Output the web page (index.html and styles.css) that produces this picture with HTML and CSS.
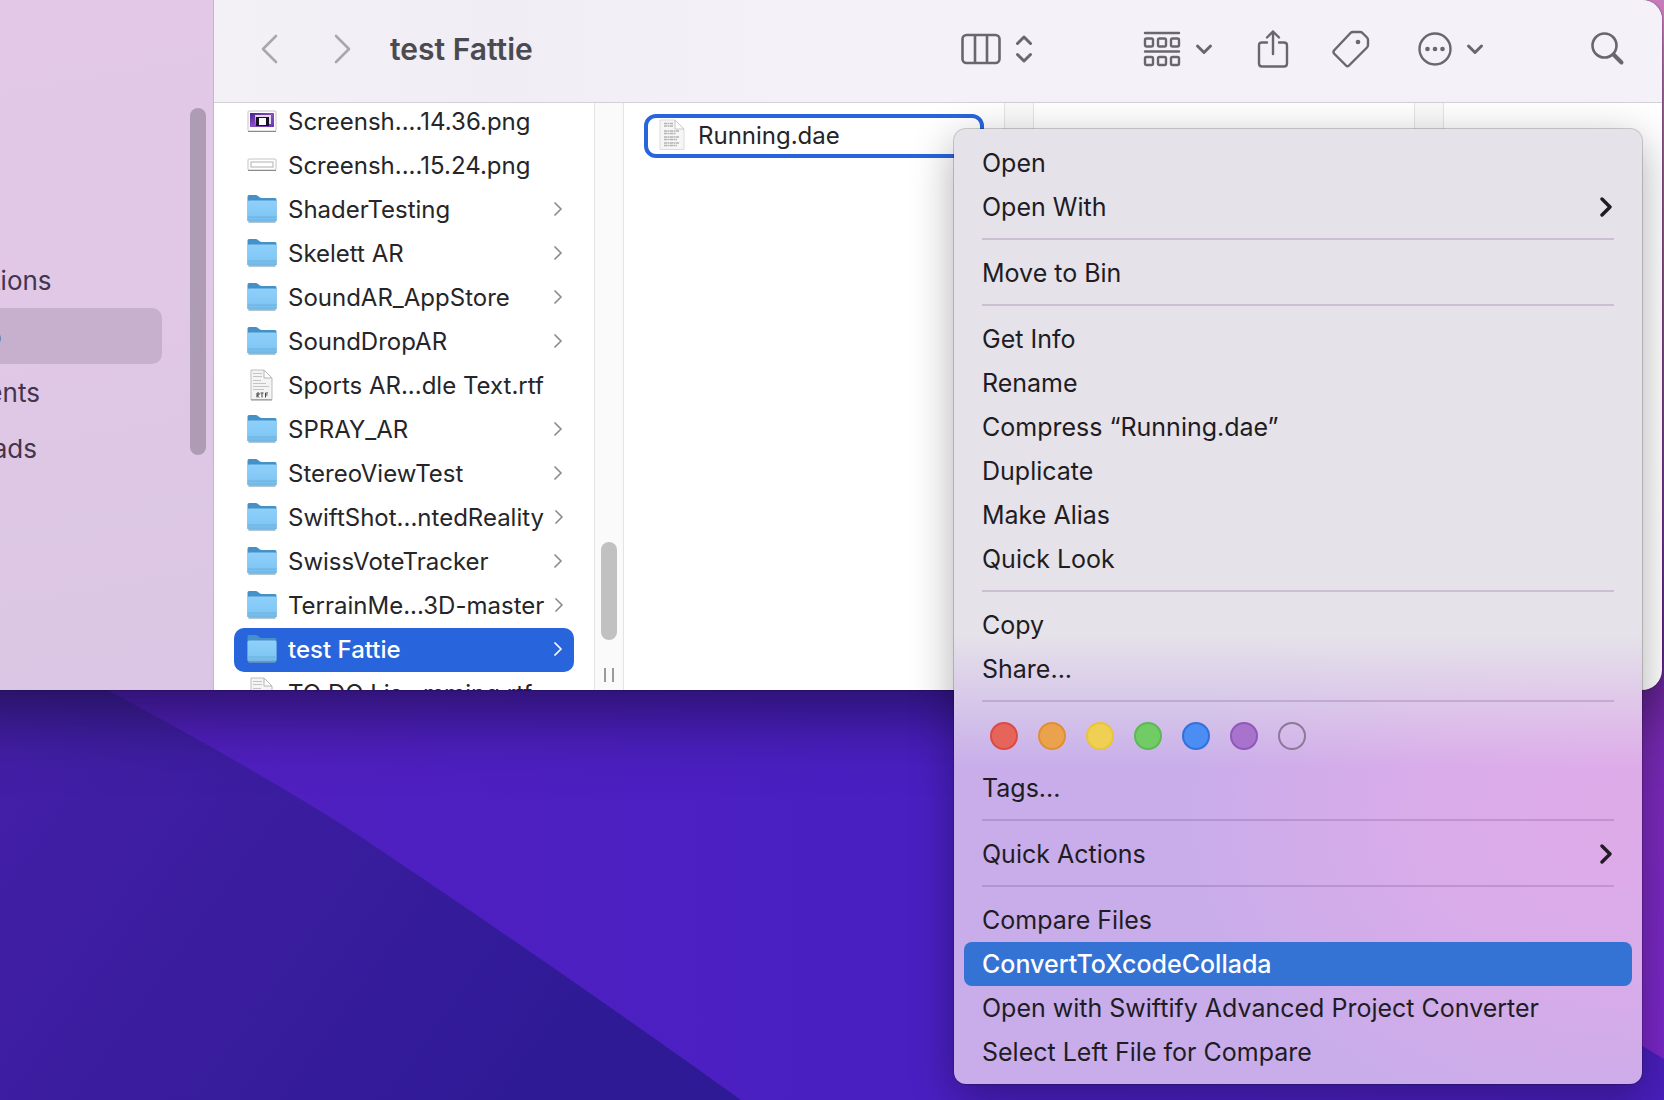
FILE: index.html
```html
<!DOCTYPE html>
<html lang="en">
<head>
<meta charset="utf-8">
<title>test Fattie</title>
<link rel="stylesheet" href="styles.css">
</head>
<body>
<svg class="symbols" aria-hidden="true">
  <defs>
    <linearGradient id="folder-front" x1="0" y1="0" x2="0" y2="1">
      <stop offset="0" stop-color="#8fd0fa"/><stop offset="0.7" stop-color="#82c8f6"/><stop offset="1" stop-color="#6fb5e4"/>
    </linearGradient>
    <linearGradient id="shot" x1="0" y1="0" x2="1" y2="1">
      <stop offset="0" stop-color="#43209a"/><stop offset="0.5" stop-color="#8a4fc0"/><stop offset="1" stop-color="#6a35b8"/>
    </linearGradient>
  </defs>
  <symbol id="folder" viewBox="0 0 30 32">
    <path d="M.5 28V3.500Q.5 2 2 2H8.500q1.500 0 2.500 1l1.500 1.200q1 .8 2.500 .8H28q1.500 0 1.500 1.500V28z" fill="#4690c8"/>
    <path d="M.5 9Q.5 7.500 2 7.500h26q1.500 0 1.500 1.500v18q0 1.500-1.500 1.500H2Q.5 28.500 .5 27z" fill="url(#folder-front)"/>
    <path d="M.5 24h29" stroke="#6fb0dc" stroke-width="1"/>
    <path d="M1.500 29h27" stroke="#7f9fb4" stroke-width="1.200"/>
  </symbol>
  <symbol id="rtf" viewBox="0 0 30 32">
    <path d="M4 1h13l8 8v21.500H4z" fill="#f4f4f4" stroke="#bdbdbd" stroke-width="1"/>
    <path d="M4 31h21" stroke="#8e8e8e" stroke-width="1"/>
    <path d="M17 1v8h8z" fill="#fff" stroke="#b5b5b5" stroke-width="1"/>
    <path d="M6 4.500h9M6 7.500h9M6 11.500h8M6 14.500h13M6 17.500h16M6 20.500h11" stroke="#c4c4c4" stroke-width="1"/>
    <path d="M10 28.500v-4.500h2v2h-2l2 2.500M13.500 24h3M15 24v4.500M18.500 28.500v-4.500h2.500M18.500 26h2" fill="none" stroke="#444" stroke-width="1"/>
  </symbol>
  <symbol id="dae" viewBox="0 0 30 32">
    <path d="M3 1h15l9 9v20.500H3z" fill="#f6f6f6" stroke="#dcdcdc" stroke-width="1"/>
    <path d="M18 1v9h9z" fill="#fff" stroke="#c8c8c8" stroke-width="1"/>
    <path d="M7 4.500h9M7 7h9M7 12h15M7 14.500h12M7 18h15M7 20.500h13M7 24h15M7 26.500h13" stroke="#b3b3b3" stroke-width="1.400" stroke-dasharray="3 .5 2 .5"/>
  </symbol>
  <symbol id="png-a" viewBox="0 0 30 32">
    <rect x="1" y="6" width="28" height="20" rx="1" fill="#fff" stroke="#c4c4c4"/>
    <path d="M1 26.500h28" stroke="#8a8a8a"/>
    <rect x="3" y="8" width="24" height="14" fill="url(#shot)"/>
    <path d="M8 10h16v9h-2l-1 2H9z" fill="#e5d9f0"/>
    <path d="M9 12h13v9H9z" fill="#161420"/><path d="M12 13h7v7h-7z" fill="#fff"/>
  </symbol>
  <symbol id="png-b" viewBox="0 0 30 32">
    <rect x="1" y="10" width="28" height="11" rx="1" fill="#fff" stroke="#c4c4c4"/>
    <path d="M1 21.500h28" stroke="#8a8a8a"/>
    <rect x="4" y="13" width="22" height="5" fill="#fff" stroke="#b0b0b0"/>
  </symbol>
  <symbol id="chev" viewBox="0 0 8 14"><path d="M1 1l6 6-6 6" fill="none" stroke="currentColor" stroke-width="1.700" stroke-linecap="round" stroke-linejoin="round"/></symbol>
  <symbol id="chev-bold" viewBox="0 0 12 20"><path d="M2 2l8 8-8 8" fill="none" stroke="currentColor" stroke-width="3.400" stroke-linecap="round" stroke-linejoin="round"/></symbol>
  <symbol id="chev-down" viewBox="0 0 18 12"><path d="M2.500 3l6.500 6.500L15.500 3" fill="none" stroke="currentColor" stroke-width="3" stroke-linecap="round" stroke-linejoin="round"/></symbol>
</svg>

<div class="desktop">
  <svg class="wallpaper" viewBox="0 0 1664 1100" preserveAspectRatio="none" aria-hidden="true">
    <defs>
      <linearGradient id="sky" x1="0" y1="0" x2="1" y2="0">
        <stop offset="0" stop-color="#5220be"/><stop offset="0.5" stop-color="#4a1fc2"/><stop offset="1" stop-color="#481ebc"/>
      </linearGradient>
      <linearGradient id="dune" x1="0" y1="700" x2="560" y2="1100" gradientUnits="userSpaceOnUse">
        <stop offset="0" stop-color="#441fa8"/><stop offset="1" stop-color="#2e1a94"/>
      </linearGradient>
      <linearGradient id="glow" x1="0" y1="0" x2="0" y2="1">
        <stop offset="0" stop-color="#d886cc"/><stop offset="0.3" stop-color="#a860b0"/><stop offset="0.650" stop-color="#7a2bb4"/><stop offset="1" stop-color="#7826c8"/>
      </linearGradient>
    </defs>
    <path d="M0 0h1664v1100H0z" fill="url(#sky)"/>
    <path d="M0 640L60 665Q250 765 355 833Q560 970 741 1100H0z" fill="url(#dune)"/>
    <path d="M1400 0h264v1059L1400 900z" fill="url(#glow)"/>
  </svg>

  <main class="window">
    <nav class="sidebar" aria-label="Favourites">
      <ul class="places">
        <li><a class="place" href="#">Applications</a></li>
        <li><a class="place current" href="#">Desktop</a></li>
        <li><a class="place" href="#">Documents</a></li>
        <li><a class="place" href="#">Downloads</a></li>
      </ul>
      <span class="scroll-thumb"></span>
    </nav>

    <section class="browser">
      <header class="toolbar">
        <div class="history">
          <button class="tool" aria-label="Back"><svg width="18" height="30" viewBox="0 0 18 30"><path d="M16 2L3 15l13 13" fill="none" stroke="#a9a6ae" stroke-width="2.600" stroke-linecap="round" stroke-linejoin="round"/></svg></button>
          <button class="tool" aria-label="Forward"><svg width="18" height="30" viewBox="0 0 18 30"><path d="M2 2l13 13L2 28" fill="none" stroke="#a9a6ae" stroke-width="2.600" stroke-linecap="round" stroke-linejoin="round"/></svg></button>
        </div>
        <h1 class="title">test Fattie</h1>
        <div class="tools">
          <button class="tool view" aria-label="View as columns">
            <svg width="40" height="32" viewBox="0 0 40 32" fill="none" stroke="currentColor" stroke-width="2.600"><rect x="1.500" y="2" width="37" height="28" rx="4"/><path d="M14 2v28M26 2v28"/></svg>
            <svg width="18" height="28" viewBox="0 0 18 28" fill="none" stroke="currentColor" stroke-width="3" stroke-linecap="round" stroke-linejoin="round"><path d="M2.500 8.500L9 2l6.500 6.500M2.500 19.500L9 26l6.500-6.500"/></svg>
          </button>
          <button class="tool group" aria-label="Group items">
            <svg width="38" height="36" viewBox="0 0 38 36" fill="none" stroke="currentColor" stroke-width="2.400" stroke-linecap="round"><path d="M2 2h34M2 20.500h34"/><rect x="2" y="7.500" width="8" height="8" rx="1.500"/><rect x="15" y="7.500" width="8" height="8" rx="1.500"/><rect x="28" y="7.500" width="8" height="8" rx="1.500"/><rect x="2" y="26" width="8" height="8" rx="1.500"/><rect x="15" y="26" width="8" height="8" rx="1.500"/><rect x="28" y="26" width="8" height="8" rx="1.500"/></svg>
            <svg width="18" height="12"><use href="#chev-down"/></svg>
          </button>
          <button class="tool share" aria-label="Share">
            <svg width="32" height="40" viewBox="0 0 32 40" fill="none" stroke="currentColor" stroke-width="2.400" stroke-linecap="round" stroke-linejoin="round"><path d="M10 13.500H5q-3 0-3 3v18q0 3 3 3h22q3 0 3-3v-18q0-3-3-3h-5M16 25V2.500M10 8.500l6-6 6 6"/></svg>
          </button>
          <button class="tool tag" aria-label="Edit tags">
            <svg width="38" height="38" viewBox="0 0 38 38" fill="none" stroke="currentColor" stroke-width="2.400" stroke-linejoin="round"><path d="M18.500 3Q19.500 2 21 2h7q1.500 0 2.500 1l4.500 4.500q1 1 1 2.500v5q0 1.500-1 2.500L17 35.500q-1.500 1.500-3 0L2 23.500q-1-1.500 0-3z"/><circle cx="26" cy="12" r="2.300" fill="currentColor" stroke="none"/></svg>
          </button>
          <button class="tool more" aria-label="More actions">
            <svg width="36" height="36" viewBox="0 0 36 36" fill="none" stroke="currentColor" stroke-width="2.400"><circle cx="18" cy="18" r="15.500"/><g fill="currentColor" stroke="none"><circle cx="10.500" cy="18" r="2.300"/><circle cx="18" cy="18" r="2.300"/><circle cx="25.500" cy="18" r="2.300"/></g></svg>
            <svg width="18" height="12"><use href="#chev-down"/></svg>
          </button>
          <button class="tool search" aria-label="Search">
            <svg width="34" height="36" viewBox="0 0 34 36" fill="none" stroke="currentColor" stroke-linecap="round"><circle cx="13.500" cy="14.500" r="12" stroke-width="2.600"/><path d="M22.500 23.500l8 8" stroke-width="4"/></svg>
          </button>
        </div>
      </header>

      <div class="columns">
        <div class="column">
          <ul class="files scrolled">
            <li><button class="file"><svg class="icon"><use href="#png-a"/></svg><span>Screensh....14.36.png</span></button></li>
            <li><button class="file"><svg class="icon"><use href="#png-b"/></svg><span>Screensh....15.24.png</span></button></li>
            <li><button class="file"><svg class="icon"><use href="#folder"/></svg><span>ShaderTesting</span><svg class="into"><use href="#chev"/></svg></button></li>
            <li><button class="file"><svg class="icon"><use href="#folder"/></svg><span>Skelett AR</span><svg class="into"><use href="#chev"/></svg></button></li>
            <li><button class="file"><svg class="icon"><use href="#folder"/></svg><span>SoundAR_AppStore</span><svg class="into"><use href="#chev"/></svg></button></li>
            <li><button class="file"><svg class="icon"><use href="#folder"/></svg><span>SoundDropAR</span><svg class="into"><use href="#chev"/></svg></button></li>
            <li><button class="file"><svg class="icon"><use href="#rtf"/></svg><span>Sports AR...dle Text.rtf</span></button></li>
            <li><button class="file"><svg class="icon"><use href="#folder"/></svg><span>SPRAY_AR</span><svg class="into"><use href="#chev"/></svg></button></li>
            <li><button class="file"><svg class="icon"><use href="#folder"/></svg><span>StereoViewTest</span><svg class="into"><use href="#chev"/></svg></button></li>
            <li><button class="file"><svg class="icon"><use href="#folder"/></svg><span>SwiftShot...ntedReality</span><svg class="into"><use href="#chev"/></svg></button></li>
            <li><button class="file"><svg class="icon"><use href="#folder"/></svg><span>SwissVoteTracker</span><svg class="into"><use href="#chev"/></svg></button></li>
            <li><button class="file"><svg class="icon"><use href="#folder"/></svg><span>TerrainMe...3D-master</span><svg class="into"><use href="#chev"/></svg></button></li>
            <li><button class="file selected"><svg class="icon"><use href="#folder"/></svg><span>test Fattie</span><svg class="into"><use href="#chev"/></svg></button></li>
            <li><button class="file"><svg class="icon"><use href="#rtf"/></svg><span>TO DO Lis...mming.rtf</span></button></li>
          </ul>
        </div>
        <div class="track"><span class="track-thumb"></span><span class="grip"></span></div>
        <div class="column">
          <ul class="files">
            <li><button class="file targeted"><svg class="icon"><use href="#dae"/></svg><span>Running.dae</span></button></li>
          </ul>
        </div>
        <div class="track"></div>
        <div class="column"></div>
        <div class="track"></div>
        <div class="column last"></div>
      </div>
    </section>
  </main>

  <div class="menu" role="menu">
    <button class="item" role="menuitem">Open</button>
    <button class="item" role="menuitem">Open With<svg class="sub"><use href="#chev-bold"/></svg></button>
    <hr class="rule">
    <button class="item" role="menuitem">Move to Bin</button>
    <hr class="rule">
    <button class="item" role="menuitem">Get Info</button>
    <button class="item" role="menuitem">Rename</button>
    <button class="item" role="menuitem">Compress “Running.dae”</button>
    <button class="item" role="menuitem">Duplicate</button>
    <button class="item" role="menuitem">Make Alias</button>
    <button class="item" role="menuitem">Quick Look</button>
    <hr class="rule">
    <button class="item" role="menuitem">Copy</button>
    <button class="item" role="menuitem">Share...</button>
    <hr class="rule">
    <div class="tags">
      <button class="dot red" aria-label="Red"></button>
      <button class="dot orange" aria-label="Orange"></button>
      <button class="dot yellow" aria-label="Yellow"></button>
      <button class="dot green" aria-label="Green"></button>
      <button class="dot blue" aria-label="Blue"></button>
      <button class="dot purple" aria-label="Purple"></button>
      <button class="dot none" aria-label="No colour"></button>
    </div>
    <button class="item" role="menuitem">Tags...</button>
    <hr class="rule">
    <button class="item" role="menuitem">Quick Actions<svg class="sub"><use href="#chev-bold"/></svg></button>
    <hr class="rule">
    <button class="item" role="menuitem">Compare Files</button>
    <button class="item active" role="menuitem">ConvertToXcodeCollada</button>
    <button class="item" role="menuitem">Open with Swiftify Advanced Project Converter</button>
    <button class="item" role="menuitem">Select Left File for Compare</button>
  </div>
</div>
</body>
</html>
```
FILE: styles.css
```css
* { box-sizing: border-box; }

body {
  margin: 0;
  font-family: Inter, "Liberation Sans", sans-serif;
  font-size: 24px;
  color: #262528;
}

button {
  font: inherit;
  color: inherit;
  background: none;
  border: 0;
  padding: 0;
  margin: 0;
  text-align: left;
}

ul { list-style: none; margin: 0; padding: 0; }
svg { display: block; flex: none; }
.symbols { position: absolute; width: 0; height: 0; }

.desktop {
  position: relative;
  height: 100vh;
  overflow: hidden;
}

.wallpaper {
  position: absolute;
  inset: 0;
  width: 100%;
  height: 100%;
}

/* Finder window, pushed partly off the left edge of the screen */
.window {
  position: relative;
  display: flex;
  height: calc(100vh - 410px);
  margin-left: -140px;
  margin-right: 2px;
  border-radius: 0 20px 20px 0;
  overflow: hidden;
  background: #fff;
  box-shadow: 0 0 2px rgba(0, 0, 0, .5), 0 20px 70px rgba(0, 0, 0, .5);
}

.sidebar {
  display: flex;
  flex: none;
  width: 354px;
  border-right: 1px solid #c9b3d2;
  background: linear-gradient(170deg, #e4c8e8 0%, #e0c8e6 45%, #dac6e4 100%);
}

.places { flex: 1; padding-top: 252px; }

.place {
  display: block;
  height: 56px;
  padding-left: 40px;
  line-height: 58px;
  font-size: 26px;
  color: #44344c;
  text-decoration: none;
  border-radius: 10px;
}

.place.current { background: #c7b0ce; }

.scroll-thumb {
  width: 16px;
  height: 347px;
  margin: 108px 7px 0 28px;
  border-radius: 8px;
  background: #ae9bb4;
}

.browser {
  display: flex;
  flex: 1;
  flex-direction: column;
  min-width: 0;
}

.toolbar {
  display: flex;
  flex: none;
  align-items: center;
  height: 103px;
  padding: 0 37px 4px 46px;
  border-bottom: 1px solid #d3d0d7;
  background: linear-gradient(90deg, #f3f0f6, #f0edf5 20%, #f4f1f8 40%, #f4f1f8);
}

.history { display: flex; gap: 56px; }

.title {
  margin: 0 0 0 38px;
  font-size: 30px;
  font-weight: 600;
  line-height: 36px;
  color: #4b4a50;
}

.tools {
  display: flex;
  align-items: center;
  margin-left: auto;
  color: #69676d;
}

.tool { display: flex; align-items: center; }
.view { gap: 14px; }
.group { gap: 14px; margin-left: 110px; }
.share { margin-left: 44px; }
.tag { margin-left: 43px; }
.more { gap: 13px; margin-left: 47px; }
.search { margin-left: 107px; }

.columns {
  display: flex;
  flex: 1;
  min-height: 0;
}

.column {
  flex: none;
  width: 380px;
  padding: 0 20px;
  overflow: hidden;
}

.column.last { flex: 1; width: auto; }

.track {
  display: flex;
  flex: none;
  flex-direction: column;
  align-items: center;
  justify-content: flex-end;
  gap: 28px;
  width: 30px;
  padding-bottom: 8px;
  border: solid #e4e4e4;
  border-width: 0 1px;
  background: #fafafa;
}

.track-thumb {
  width: 16px;
  height: 98px;
  border-radius: 8px;
  background: #c1c1c1;
}

.grip {
  width: 10px;
  height: 14px;
  border: solid #9a9a9a;
  border-width: 0 2px;
}

.files { padding-top: 11px; }
.files.scrolled { padding: 0; margin-top: -3px; }

.file {
  display: flex;
  align-items: center;
  gap: 11px;
  width: 100%;
  height: 44px;
  padding: 0 12px 2px 13px;
  border-radius: 10px;
  white-space: nowrap;
}

.file.selected {
  background: #2865dc;
  color: #fff;
  font-weight: 500;
}

.file.targeted {
  border: 4px solid #2865dc;
  border-radius: 12px;
  padding: 0 8px 2px 9px;
}

.icon { width: 30px; height: 32px; }

.into {
  width: 8px;
  height: 14px;
  margin-left: auto;
  color: #8c8c8c;
}

.selected .into { color: #fff; }

/* Context menu floating above the window */
.menu {
  position: absolute;
  top: 129px;
  left: 954px;
  width: 688px;
  padding: 12px 10px 10px;
  border-radius: 12px;
  color: #1f1c24;
  font-size: 25px;
  background:
    linear-gradient(#e5e2e9 53%, rgba(229, 226, 233, 0) 67%),
    radial-gradient(ellipse 68% 34% at 100% 72%, #deabe9 15%, rgba(222, 171, 233, .75) 50%, rgba(222, 171, 233, 0) 100%),
    #c8adea;
  box-shadow: 0 0 0 1px rgba(0, 0, 0, .18), 0 12px 44px rgba(0, 0, 0, .32);
}

.item {
  display: flex;
  align-items: center;
  justify-content: space-between;
  width: 100%;
  height: 44px;
  padding: 0 20px 0 18px;
  border-radius: 8px;
  white-space: nowrap;
}

.item.active {
  background: #3472d4;
  color: #fff;
  font-weight: 500;
}

.sub { width: 12px; height: 20px; }

.rule {
  height: 2px;
  margin: 9px 18px 11px;
  border: 0;
  background: rgba(60, 20, 90, .16);
}

.tags {
  display: flex;
  gap: 20px;
  padding: 9px 26px 16px;
}

.dot {
  width: 28px;
  height: 28px;
  border: 2px solid;
  border-radius: 50%;
}

.red { background: #e5655a; border-color: #dc4a44; }
.orange { background: #eba24c; border-color: #e08f34; }
.yellow { background: #f0cf55; border-color: #e8c53a; }
.green { background: #72cc66; border-color: #5cb954; }
.blue { background: #4b8df2; border-color: #3271dc; }
.purple { background: #a873cc; border-color: #9058b8; }
.none { border-color: #8b7a98; }
```
